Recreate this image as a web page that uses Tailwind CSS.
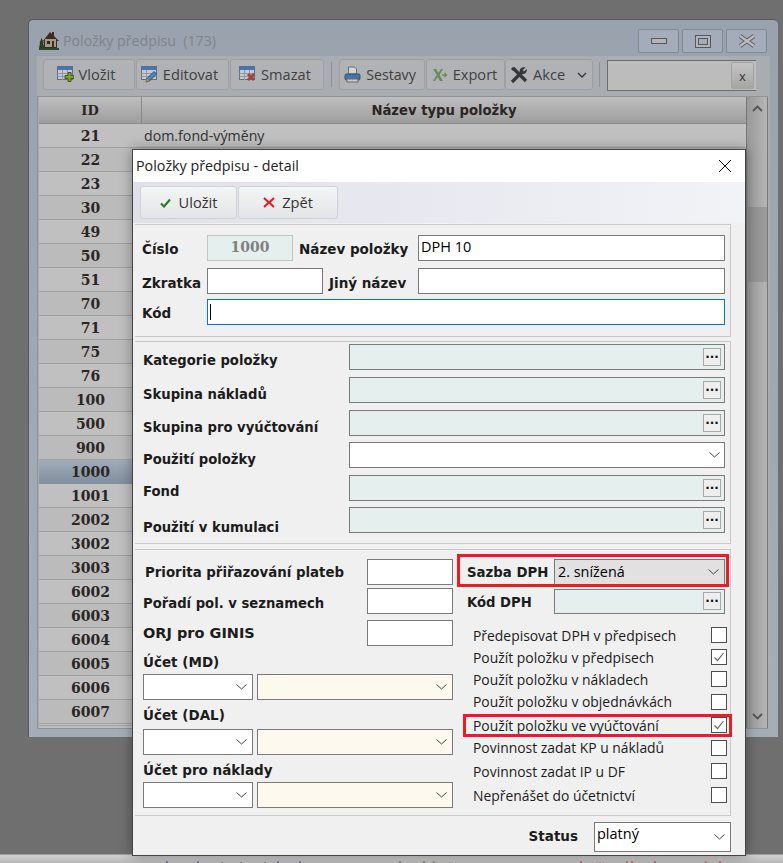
<!doctype html>
<html>
<head>
    <meta charset="utf-8">
    <title>Položky předpisu</title>
    <script src="https://cdn.jsdelivr.net/npm/@tailwindcss/browser@4"></script>
</head>
<body class="bg-[#6f6f6f]">
<div class="relative w-[783px] h-[863px] overflow-hidden bg-[#6f6f6f] font-['Open_Sans',sans-serif]">

    <!-- bottom strip of the page behind -->
    <div class="absolute left-0 right-0 top-[854px] h-[9px] bg-gradient-to-b from-[#cfcfcf] to-[#b8b8b8] border-t border-[#a0a0a0]">
        <svg width="783" height="8" viewBox="0 0 783 8" class="block">
            <path d="M167 6V8M198 6V8M222 7V8M241 7V8M265 7V8M278 6V8M300 6V8" stroke="#3c4d8c"/>
            <path d="M400 6V8M424 6V8M434 6V8M450 7V8" stroke="#4a7a3a"/>
            <path d="M581 6V8M600 7V8M627 6V8M632 6V8M655 6V8M706 6V8M720 6V8" stroke="#c83a3a"/>
        </svg>
    </div>

    <!-- background window -->
    <div class="absolute left-[28px] top-[19px] w-[750px] h-[718px] rounded-t-[5px] bg-gradient-to-b from-[#9aa2ad] to-[#a5adb8] border-t border-l border-[#55595e] flex flex-col">
        <div class="h-[36px] flex items-center pl-[10px] pr-[11px] pt-[6px] shrink-0">
            <svg width="20" height="20" viewBox="0 0 20 20" class="shrink-0">
                <path d="M2.500 7 L5 12 L4 12 L5.500 17 L0 17 L1 12 L0.500 12 Z" fill="#2c3d26"/>
                <path d="M4 10 L11 1 L13 3 L13 1 L15 1 L15 5 L20 10 L18 10 L18 17 L5 17 L5 10 Z" fill="#3d2a20"/>
                <rect x="6" y="8" width="11" height="8" fill="#a59a8a"/>
                <rect x="8" y="10" width="3" height="3" fill="#2a2522"/>
                <rect x="13" y="10" width="2" height="6" fill="#3d2f27"/>
                <rect x="0" y="17" width="20" height="2" fill="#33442c"/>
            </svg>
            <span class="ml-[4px] text-[14.200px] text-[#7f858c] whitespace-pre">Položky předpisu  (173)</span>
            <div class="ml-auto flex gap-[3px]">
                <div class="w-[41px] h-[24px] border border-[#7d8a9b] rounded-[2px] bg-[#a3acb8] flex items-center justify-center"><div class="w-[16px] h-[6px] border border-[#55585c] bg-[#b4b4b4]"></div></div>
                <div class="w-[41px] h-[24px] border border-[#7d8a9b] rounded-[2px] bg-[#a3acb8] flex items-center justify-center"><div class="w-[16px] h-[13px] border border-[#55585c] bg-[#b4b4b4] flex items-center justify-center"><div class="w-[10px] h-[7px] border border-[#55585c] bg-[#a3acb8]"></div></div></div>
                <div class="w-[41px] h-[24px] border border-[#7d8a9b] rounded-[2px] bg-[#a3acb8] flex items-center justify-center">
                    <svg width="18" height="14" viewBox="0 0 18 14"><path d="M2 2 L16 12 M16 2 L2 12" stroke="#55585c" stroke-width="4"/><path d="M2 2 L16 12 M16 2 L2 12" stroke="#bdbdbd" stroke-width="2.400"/></svg>
                </div>
            </div>
        </div>
        <div class="ml-[8px] mr-[8px] mb-[8px] flex-1 flex flex-col min-h-0 bg-[#a9adb2]">
            <!-- toolbar -->
            <div class="h-[40px] flex items-start pt-[3px] pl-[6px] shrink-0 text-[14.600px] text-[#3f3f3f]">
                <div class="w-[92px] h-[31px] pr-[6px] rounded-[3px] border border-[#9c9fa3] bg-[#b0b2b5] flex items-center justify-center gap-[5px]">
                    <svg width="17" height="17" viewBox="0 0 17 17"><rect x="0.500" y="0.500" width="15" height="13" fill="#c6c9ce" stroke="#5c6f8a"/><rect x="1" y="1" width="14" height="3" fill="#3f78b5"/><path d="M0.500 7.500H15M0.500 10.500H15M5.500 4V14M10.500 4V14" stroke="#8f98a5"/><path d="M11 6.500h3v3h3v3h-3v3h-3v-3H8v-3h3z" fill="#7fa32a" stroke="#40591a"/></svg>
                    <span>Vložit</span>
                </div>
                <div class="ml-[1px] w-[93px] h-[31px] pr-[6px] rounded-[3px] border border-[#9c9fa3] bg-[#b0b2b5] flex items-center justify-center gap-[5px]">
                    <svg width="17" height="17" viewBox="0 0 17 17"><rect x="0.500" y="0.500" width="15" height="13" fill="#c6c9ce" stroke="#5c6f8a"/><rect x="1" y="1" width="14" height="3" fill="#3f78b5"/><path d="M0.500 7.500H15M0.500 10.500H15M5.500 4V14" stroke="#8f98a5"/><path d="M5 16 L6 12.500 L13 5.500 L15.500 8 L8.500 15 Z" fill="#4f86bd" stroke="#34506e"/><path d="M5 16 L6 12.500 L8.500 15 Z" fill="#c88a3a"/></svg>
                    <span>Editovat</span>
                </div>
                <div class="ml-[1px] w-[94px] h-[31px] pr-[4px] rounded-[3px] border border-[#9c9fa3] bg-[#b0b2b5] flex items-center justify-center gap-[5px]">
                    <svg width="17" height="17" viewBox="0 0 17 17"><rect x="0.500" y="0.500" width="15" height="13" fill="#c6c9ce" stroke="#5c6f8a"/><rect x="1" y="1" width="14" height="3" fill="#3f78b5"/><path d="M0.500 7.500H15M0.500 10.500H15M5.500 4V14M10.500 4V14" stroke="#8f98a5"/><path d="M9 8 L15 14 M15 8 L9 14" stroke="#a8433a" stroke-width="3"/></svg>
                    <span>Smazat</span>
                </div>
                <div class="ml-[7px] mt-[3px] w-px h-[25px] bg-[#8f9296]"></div>
                <div class="ml-[7px] w-[86px] h-[31px] pr-[4px] rounded-[3px] border border-[#9c9fa3] bg-[#b0b2b5] flex items-center justify-center gap-[5px] text-[14.200px]">
                    <svg width="17" height="17" viewBox="0 0 17 17"><path d="M4.500 1h6l2 2v5h-8z" fill="#d5d5d5" stroke="#6d6d6d"/><rect x="1" y="8" width="15" height="6" rx="1.500" fill="#3f78ad" stroke="#3a4f66"/><rect x="3" y="13" width="11" height="3" fill="#c8c8c8" stroke="#6d6d6d"/></svg>
                    <span>Sestavy</span>
                </div>
                <div class="ml-[1px] w-[79px] h-[31px] pr-[2px] rounded-[3px] border border-[#9c9fa3] bg-[#b0b2b5] flex items-center justify-center gap-[5px]">
                    <svg width="16" height="14" viewBox="0 0 16 14"><path d="M1 1h3l2.500 4L9 1h2L7.500 7 11 13H8L5.800 9 3 13H1l4-6z" fill="#6a8a55"/><path d="M10 7h4M12.500 5l2 2-2 2" stroke="#6a8a55" stroke-width="1.400" fill="none"/></svg>
                    <span>Export</span>
                </div>
                <div class="w-[88px] h-[31px] rounded-[3px] border border-[#9c9fa3] bg-[#b0b2b5] flex items-center pl-[4px]">
                    <svg width="18" height="18" viewBox="0 0 18 18"><path d="M2 16 L12 6" stroke="#33363a" stroke-width="3.200"/><path d="M10 7 C8.500 3 12 0.500 15.500 1.500 L12.800 4 L14 5.500 L16.800 3 C17.500 7 13.500 9.500 10 7Z" fill="#33363a"/><path d="M3 2 L16 15" stroke="#33363a" stroke-width="3.200"/><path d="M1 3 L3 1 L5 3 L3 5Z" fill="#33363a"/></svg>
                    <span class="ml-[5px]">Akce</span>
                    <svg width="10" height="6" viewBox="0 0 10 6" class="ml-auto mr-[5px]"><path d="M1 1 L5 5 L9 1" stroke="#333" stroke-width="1.300" fill="none"/></svg>
                </div>
                <div class="ml-[6px] mt-[3px] w-px h-[25px] bg-[#8f9296]"></div>
                <div class="ml-[7px] mt-[1px] w-[149px] h-[31px] border-l border-t border-b border-[#6d6f72] bg-[#bcbcbc] flex items-center justify-end pr-[2px]">
                    <div class="w-[23px] h-[27px] rounded-[2px] border border-[#a3a3a3] bg-gradient-to-b from-[#c4c4c4] to-[#a6a6a6] text-center leading-[27px] text-[13px] text-[#333]">x</div>
                </div>
            </div>
            <!-- table -->
            <div class="flex-1 mr-[2px] pl-[1px] border-t border-l border-b border-[#8f9296] flex min-h-0 overflow-hidden">
                <div class="flex-1 min-w-0 flex flex-col bg-[#bfbfbf]">
                    <div class="h-[27px] shrink-0 flex bg-gradient-to-b from-[#bfbfbf] to-[#9d9d9d] border-b border-[#8a8a8a] font-bold text-[#2b2523] text-[14px]">
                        <div class="w-[103px] border-r border-[#8a8a8a] text-center leading-[28px] font-['DejaVu_Serif',serif] text-[13px]">ID</div>
                        <div class="flex-1 text-center leading-[28px] font-['DejaVu_Sans',sans-serif] text-[13.200px]">Název typu položky</div>
                    </div>
                    <div class="h-[24px] flex border-b border-[#a0a0a0] bg-[#c0c0c0]"><div class="w-[103px] text-center leading-[25px] font-bold font-['DejaVu_Serif',serif] text-[14px] text-[#2b2523]">21</div><div class="pl-[2px] leading-[23px] text-[14.200px] text-[#333]">dom.fond-výměny</div></div>
                    <div class="h-[24px] border-b border-[#a0a0a0] bg-[#bbbbbb] w-full"><div class="w-[103px] text-center leading-[25px] font-bold font-['DejaVu_Serif',serif] text-[14px] text-[#2b2523]">22</div></div>
                    <div class="h-[24px] border-b border-[#a0a0a0] bg-[#c0c0c0] w-full"><div class="w-[103px] text-center leading-[25px] font-bold font-['DejaVu_Serif',serif] text-[14px] text-[#2b2523]">23</div></div>
                    <div class="h-[24px] border-b border-[#a0a0a0] bg-[#bbbbbb] w-full"><div class="w-[103px] text-center leading-[25px] font-bold font-['DejaVu_Serif',serif] text-[14px] text-[#2b2523]">30</div></div>
                    <div class="h-[24px] border-b border-[#a0a0a0] bg-[#c0c0c0] w-full"><div class="w-[103px] text-center leading-[25px] font-bold font-['DejaVu_Serif',serif] text-[14px] text-[#2b2523]">49</div></div>
                    <div class="h-[24px] border-b border-[#a0a0a0] bg-[#bbbbbb] w-full"><div class="w-[103px] text-center leading-[25px] font-bold font-['DejaVu_Serif',serif] text-[14px] text-[#2b2523]">50</div></div>
                    <div class="h-[24px] border-b border-[#a0a0a0] bg-[#c0c0c0] w-full"><div class="w-[103px] text-center leading-[25px] font-bold font-['DejaVu_Serif',serif] text-[14px] text-[#2b2523]">51</div></div>
                    <div class="h-[24px] border-b border-[#a0a0a0] bg-[#bbbbbb] w-full"><div class="w-[103px] text-center leading-[25px] font-bold font-['DejaVu_Serif',serif] text-[14px] text-[#2b2523]">70</div></div>
                    <div class="h-[24px] border-b border-[#a0a0a0] bg-[#c0c0c0] w-full"><div class="w-[103px] text-center leading-[25px] font-bold font-['DejaVu_Serif',serif] text-[14px] text-[#2b2523]">71</div></div>
                    <div class="h-[24px] border-b border-[#a0a0a0] bg-[#bbbbbb] w-full"><div class="w-[103px] text-center leading-[25px] font-bold font-['DejaVu_Serif',serif] text-[14px] text-[#2b2523]">75</div></div>
                    <div class="h-[24px] border-b border-[#a0a0a0] bg-[#c0c0c0] w-full"><div class="w-[103px] text-center leading-[25px] font-bold font-['DejaVu_Serif',serif] text-[14px] text-[#2b2523]">76</div></div>
                    <div class="h-[24px] border-b border-[#a0a0a0] bg-[#bbbbbb] w-full"><div class="w-[103px] text-center leading-[25px] font-bold font-['DejaVu_Serif',serif] text-[14px] text-[#2b2523]">100</div></div>
                    <div class="h-[24px] border-b border-[#a0a0a0] bg-[#c0c0c0] w-full"><div class="w-[103px] text-center leading-[25px] font-bold font-['DejaVu_Serif',serif] text-[14px] text-[#2b2523]">500</div></div>
                    <div class="h-[24px] border-b border-[#a0a0a0] bg-[#bbbbbb] w-full"><div class="w-[103px] text-center leading-[25px] font-bold font-['DejaVu_Serif',serif] text-[14px] text-[#2b2523]">900</div></div>
                    <div class="h-[24px] bg-gradient-to-b from-[#a0acb9] to-[#808e9d] w-full"><div class="w-[103px] text-center leading-[25px] font-bold font-['DejaVu_Serif',serif] text-[14px] text-[#2b2523]">1000</div></div>
                    <div class="h-[24px] border-b border-[#a0a0a0] bg-[#c0c0c0] w-full"><div class="w-[103px] text-center leading-[25px] font-bold font-['DejaVu_Serif',serif] text-[14px] text-[#2b2523]">1001</div></div>
                    <div class="h-[24px] border-b border-[#a0a0a0] bg-[#bbbbbb] w-full"><div class="w-[103px] text-center leading-[25px] font-bold font-['DejaVu_Serif',serif] text-[14px] text-[#2b2523]">2002</div></div>
                    <div class="h-[24px] border-b border-[#a0a0a0] bg-[#c0c0c0] w-full"><div class="w-[103px] text-center leading-[25px] font-bold font-['DejaVu_Serif',serif] text-[14px] text-[#2b2523]">3002</div></div>
                    <div class="h-[24px] border-b border-[#a0a0a0] bg-[#bbbbbb] w-full"><div class="w-[103px] text-center leading-[25px] font-bold font-['DejaVu_Serif',serif] text-[14px] text-[#2b2523]">3003</div></div>
                    <div class="h-[24px] border-b border-[#a0a0a0] bg-[#c0c0c0] w-full"><div class="w-[103px] text-center leading-[25px] font-bold font-['DejaVu_Serif',serif] text-[14px] text-[#2b2523]">6002</div></div>
                    <div class="h-[24px] border-b border-[#a0a0a0] bg-[#bbbbbb] w-full"><div class="w-[103px] text-center leading-[25px] font-bold font-['DejaVu_Serif',serif] text-[14px] text-[#2b2523]">6003</div></div>
                    <div class="h-[24px] border-b border-[#a0a0a0] bg-[#c0c0c0] w-full"><div class="w-[103px] text-center leading-[25px] font-bold font-['DejaVu_Serif',serif] text-[14px] text-[#2b2523]">6004</div></div>
                    <div class="h-[24px] border-b border-[#a0a0a0] bg-[#bbbbbb] w-full"><div class="w-[103px] text-center leading-[25px] font-bold font-['DejaVu_Serif',serif] text-[14px] text-[#2b2523]">6005</div></div>
                    <div class="h-[24px] border-b border-[#a0a0a0] bg-[#c0c0c0] w-full"><div class="w-[103px] text-center leading-[25px] font-bold font-['DejaVu_Serif',serif] text-[14px] text-[#2b2523]">6006</div></div>
                    <div class="h-[24px] border-b border-[#a0a0a0] bg-[#bbbbbb] w-full"><div class="w-[103px] text-center leading-[25px] font-bold font-['DejaVu_Serif',serif] text-[14px] text-[#2b2523]">6007</div></div>
                    <div class="h-[2px] shrink-0 border-b border-[#a0a0a0]"></div>
                </div>
                <!-- scrollbar -->
                <div class="w-[22px] shrink-0 flex flex-col items-center bg-gradient-to-r from-[#999999] to-[#b5b5b5] border-l border-[#777] border-r">
                    <svg width="11" height="7" viewBox="0 0 11 7" class="mt-[8px]"><path d="M1 6 L5.500 1.500 L10 6" stroke="#555" stroke-width="1.800" fill="none"/></svg>
                    <div class="w-[19px] h-[75px] mt-[95px] bg-gradient-to-r from-[#8e8e8e] to-[#9c9c9c]"></div>
                    <svg width="11" height="7" viewBox="0 0 11 7" class="mt-auto mb-[8px]"><path d="M1 1 L5.500 5.500 L10 1" stroke="#555" stroke-width="1.800" fill="none"/></svg>
                </div>
            </div>
        </div>
    </div>

    <!-- detail dialog -->
    <div class="absolute left-[132px] top-[149px] w-[614px] h-[707px] border border-[#444] bg-[#f0f0f0] flex flex-col shadow-[0_0_12px_rgba(0,0,0,0.35)]">
        <div class="h-[32px] shrink-0 bg-white flex items-center pl-[3px] pr-[13px] text-[14.300px] text-[#222]">
            <span>Položky předpisu - detail</span>
            <svg width="14" height="14" viewBox="0 0 14 14" class="ml-auto"><path d="M1 1 L13 13 M13 1 L1 13" stroke="#111" stroke-width="1"/></svg>
        </div>
        <div class="h-[41px] shrink-0 bg-gradient-to-r from-[#dfe0ea] to-[#f2f3f7] flex items-center pl-[7px] text-[14.600px] text-[#333]">
            <div class="w-[97px] h-[33px] rounded-[3px] border border-[#d0d2d6] bg-gradient-to-b from-[#f3f4f4] to-[#e4e5e7] flex items-center justify-center gap-[8px]">
                <svg width="11" height="10" viewBox="0 0 11 10"><path d="M1 5.500 L4 8.500 L10 1.500" stroke="#1e7d1e" stroke-width="2" fill="none"/></svg>
                <span>Uložit</span>
            </div>
            <div class="ml-[1px] w-[100px] h-[33px] rounded-[3px] border border-[#d0d2d6] bg-gradient-to-b from-[#f3f4f4] to-[#e4e5e7] flex items-center justify-center gap-[7px]">
                <svg width="12" height="11" viewBox="0 0 12 11"><path d="M1 1 L11 10 M11 1 L1 10" stroke="#e8141c" stroke-width="2"/></svg>
                <span>Zpět</span>
            </div>
        </div>

        <div class="flex-1 min-h-0 pl-[2px] pr-[14px] pt-[1px] text-[14px] font-bold text-[#1c1c1c] font-['DejaVu_Sans',sans-serif]">
            <!-- group 1 -->
            <div class="h-[113px] border-t border-b border-r border-[#c8c8c8] pt-[10px] pl-[8px] text-[13.500px]">
                <div class="flex items-center h-[26px]">
                    <span class="w-[64px] pt-[3px] -ml-[1px] mr-[1px]">Číslo</span>
                    <div class="w-[86px] h-[26px] border border-[#c4c4c4] bg-[#e4efee] text-center leading-[22px] font-['DejaVu_Serif',serif] text-[#808080] text-[14px]">1000</div>
                    <span class="w-[125px] pt-[3px] pl-[6px]">Název položky</span>
                    <div class="w-[307px] h-[26px] border border-[#7a7a7a] bg-white pl-[2px] font-normal text-[14.500px] leading-[22px] font-['Open_Sans',sans-serif] text-black">DPH 10</div>
                </div>
                <div class="flex items-center h-[26px] mt-[7px]">
                    <span class="w-[64px] pt-[4px] -ml-[1px] mr-[1px]">Zkratka</span>
                    <div class="w-[116px] h-[26px] border border-[#7a7a7a] bg-white"></div>
                    <span class="w-[95px] pt-[4px] pl-[6px]">Jiný název</span>
                    <div class="w-[307px] h-[26px] border border-[#7a7a7a] bg-white"></div>
                </div>
                <div class="flex items-center h-[26px] mt-[5px]">
                    <span class="w-[64px] pt-[2px] -ml-[1px] mr-[1px]">Kód</span>
                    <div class="w-[518px] h-[26px] border border-[#0078d7] bg-white pl-[2px] flex items-center"><div class="w-px h-[16px] bg-black"></div></div>
                </div>
            </div>
            <!-- group 2 -->
            <div class="mt-[4px] h-[203px] border-t border-b border-r border-[#c8c8c8] pt-[2px] pl-[8px] text-[13.200px]">
                <div class="flex items-center h-[26px]">
                    <span class="w-[206px] pt-[8px]">Kategorie položky</span>
                    <div class="w-[376px] h-[26px] border border-[#7a7a7a] bg-[#e4efee] flex items-center justify-end pr-[3px]"><div class="w-[18px] h-[18px] border border-[#a8a8a8] bg-[#eeeeee] text-center leading-[11px] text-[#111] text-[12px] font-bold">...</div></div>
                </div>
                <div class="flex items-center h-[26px] mt-[7px]">
                    <span class="w-[206px] pt-[10px]">Skupina nákladů</span>
                    <div class="w-[376px] h-[26px] border border-[#7a7a7a] bg-[#e4efee] flex items-center justify-end pr-[3px]"><div class="w-[18px] h-[18px] border border-[#a8a8a8] bg-[#eeeeee] text-center leading-[11px] text-[#111] text-[12px] font-bold">...</div></div>
                </div>
                <div class="flex items-center h-[26px] mt-[7px]">
                    <span class="w-[206px] pt-[10px]">Skupina pro vyúčtování</span>
                    <div class="w-[376px] h-[26px] border border-[#7a7a7a] bg-[#e4efee] flex items-center justify-end pr-[3px]"><div class="w-[18px] h-[18px] border border-[#a8a8a8] bg-[#eeeeee] text-center leading-[11px] text-[#111] text-[12px] font-bold">...</div></div>
                </div>
                <div class="flex items-center h-[26px] mt-[6px]">
                    <span class="w-[206px] pt-[10px]">Použití položky</span>
                    <div class="w-[376px] h-[26px] border border-[#7a7a7a] bg-white flex items-center justify-end pr-[4px]"><svg width="11" height="6" viewBox="0 0 11 6"><path d="M0.500 0.500 L5.500 5 L10.500 0.500" stroke="#444" fill="none"/></svg></div>
                </div>
                <div class="flex items-center h-[26px] mt-[7px]">
                    <span class="w-[206px] pt-[8px]">Fond</span>
                    <div class="w-[376px] h-[26px] border border-[#7a7a7a] bg-[#e4efee] flex items-center justify-end pr-[3px]"><div class="w-[18px] h-[18px] border border-[#a8a8a8] bg-[#eeeeee] text-center leading-[11px] text-[#111] text-[12px] font-bold">...</div></div>
                </div>
                <div class="flex items-center h-[26px] mt-[6px]">
                    <span class="w-[206px] pt-[16px]">Použití v kumulaci</span>
                    <div class="w-[376px] h-[26px] border border-[#7a7a7a] bg-[#e4efee] flex items-center justify-end pr-[3px]"><div class="w-[18px] h-[18px] border border-[#a8a8a8] bg-[#eeeeee] text-center leading-[11px] text-[#111] text-[12px] font-bold">...</div></div>
                </div>
            </div>
            <!-- group 3 -->
            <div class="mt-[5px] h-[267px] border-t border-b border-[#c8c8c8] flex text-[13.500px]">
                <div class="w-[323px] pl-[8px] pt-[9px]">
                    <div class="flex items-center h-[26px]"><span class="w-[224px] pl-[2px] pt-[3px] text-[13.350px]">Priorita přiřazování plateb</span><div class="w-[86px] h-[26px] border border-[#7a7a7a] bg-white"></div></div>
                    <div class="flex items-center h-[26px] mt-[3px]"><span class="w-[224px] pt-[5px] text-[13.200px]">Pořadí pol. v seznamech</span><div class="w-[86px] h-[26px] border border-[#7a7a7a] bg-white"></div></div>
                    <div class="flex items-center h-[26px] mt-[6px]"><span class="w-[224px] pt-[2px] text-[14.500px]">ORJ pro GINIS</span><div class="w-[86px] h-[26px] border border-[#7a7a7a] bg-white"></div></div>
                    <div class="h-[28px] leading-[32px]">Účet (MD)</div>
                    <div class="flex gap-[4px] h-[26px]">
                        <div class="w-[110px] border border-[#7a7a7a] bg-white flex items-center justify-end pr-[5px]"><svg width="11" height="6" viewBox="0 0 11 6"><path d="M0.500 0.500 L5.500 5 L10.500 0.500" stroke="#444" fill="none"/></svg></div>
                        <div class="w-[196px] border border-[#7a7a7a] bg-[#fdf9ef] flex items-center justify-end pr-[5px]"><svg width="11" height="6" viewBox="0 0 11 6"><path d="M0.500 0.500 L5.500 5 L10.500 0.500" stroke="#444" fill="none"/></svg></div>
                    </div>
                    <div class="h-[29px] leading-[31px]">Účet (DAL)</div>
                    <div class="flex gap-[4px] h-[26px]">
                        <div class="w-[110px] border border-[#7a7a7a] bg-white flex items-center justify-end pr-[5px]"><svg width="11" height="6" viewBox="0 0 11 6"><path d="M0.500 0.500 L5.500 5 L10.500 0.500" stroke="#444" fill="none"/></svg></div>
                        <div class="w-[196px] border border-[#7a7a7a] bg-[#fdf9ef] flex items-center justify-end pr-[5px]"><svg width="11" height="6" viewBox="0 0 11 6"><path d="M0.500 0.500 L5.500 5 L10.500 0.500" stroke="#444" fill="none"/></svg></div>
                    </div>
                    <div class="h-[27px] leading-[31px]">Účet pro náklady</div>
                    <div class="flex gap-[4px] h-[26px]">
                        <div class="w-[110px] border border-[#7a7a7a] bg-white flex items-center justify-end pr-[5px]"><svg width="11" height="6" viewBox="0 0 11 6"><path d="M0.500 0.500 L5.500 5 L10.500 0.500" stroke="#444" fill="none"/></svg></div>
                        <div class="w-[196px] border border-[#7a7a7a] bg-[#fdf9ef] flex items-center justify-end pr-[5px]"><svg width="11" height="6" viewBox="0 0 11 6"><path d="M0.500 0.500 L5.500 5 L10.500 0.500" stroke="#444" fill="none"/></svg></div>
                    </div>
                </div>
                <div class="flex-1 border-r border-[#c8c8c8] pt-[9px] relative font-normal">
                    <div class="flex items-center h-[26px] font-bold"><span class="w-[96px] pl-[9px] pt-[2px] text-[13.300px]">Sazba DPH</span>
                        <div class="w-[171px] h-[26px] border border-[#7a7a7a] bg-[#e1e1e1] flex items-center pl-[3px] pb-[1px] font-normal text-[14.400px] font-['Open_Sans',sans-serif] text-black">2. snížená<svg width="11" height="6" viewBox="0 0 11 6" class="ml-auto mr-[5px]"><path d="M0.500 0.500 L5.500 5 L10.500 0.500" stroke="#444" fill="none"/></svg></div>
                    </div>
                    <div class="flex items-center h-[26px] mt-[3px] font-bold"><span class="w-[96px] pl-[9px] pt-[4px] text-[13.200px]">Kód DPH</span>
                        <div class="w-[171px] h-[25px] border border-[#7a7a7a] bg-[#e4efee] flex items-center justify-end pr-[3px]"><div class="w-[18px] h-[18px] border border-[#a8a8a8] bg-[#eeeeee] text-center leading-[11px] text-[#111] text-[12px] font-bold">...</div></div>
                    </div>
                    <div class="font-['Open_Sans',sans-serif] text-[13.900px] text-[#1c1c1c] mt-[10px] pl-[15px] pr-[3px]">
                        <div class="flex items-center justify-between h-[22px]"><span class="pt-[2px]">Předepisovat DPH v předpisech</span><div class="w-[16px] h-[16px] border border-[#4d4d4d] bg-white"></div></div>
                        <div class="flex items-center justify-between h-[22px]"><span class="pt-[2px]">Použít položku v předpisech</span><div class="w-[16px] h-[16px] border border-[#4d4d4d] bg-white"><svg width="14" height="14" viewBox="0 0 14 14"><path d="M2.500 7.500 L5.500 10.500 L11.500 3" stroke="#666" stroke-width="1.200" fill="none"/></svg></div></div>
                        <div class="flex items-center justify-between h-[22px]"><span class="pt-[2px]">Použít položku v nákladech</span><div class="w-[16px] h-[16px] border border-[#4d4d4d] bg-white"></div></div>
                        <div class="flex items-center justify-between h-[23px]"><span class="pt-[2px]">Použít položku v objednávkách</span><div class="w-[16px] h-[16px] border border-[#4d4d4d] bg-white"></div></div>
                        <div class="flex items-center justify-between h-[23px]"><span class="pt-[3px]">Použít položku ve vyúčtování</span><div class="w-[16px] h-[16px] border border-[#4d4d4d] bg-white"><svg width="14" height="14" viewBox="0 0 14 14"><path d="M2.500 7.500 L5.500 10.500 L11.500 3" stroke="#666" stroke-width="1.200" fill="none"/></svg></div></div>
                        <div class="flex items-center justify-between h-[23px]"><span class="pt-[2px]">Povinnost zadat KP u nákladů</span><div class="w-[16px] h-[16px] border border-[#4d4d4d] bg-white"></div></div>
                        <div class="flex items-center justify-between h-[24px]"><span class="pt-[2px]">Povinnost zadat IP u DF</span><div class="w-[16px] h-[16px] border border-[#4d4d4d] bg-white"></div></div>
                        <div class="flex items-center justify-between h-[24px]"><span class="pt-[2px]">Nepřenášet do účetnictví</span><div class="w-[16px] h-[16px] border border-[#4d4d4d] bg-white"></div></div>
                    </div>
                    <!-- red highlights -->
                    <div class="absolute -left-[1px] top-[4px] w-[272px] h-[33px] border-[3px] border-[#ed1c24]"></div>
                    <div class="absolute left-[5px] top-[164px] w-[269px] h-[23px] border-[3px] border-[#ed1c24]"></div>
                </div>
            </div>
            <!-- status -->
            <div class="flex items-center justify-end h-[38px] pt-[4px] text-[13.500px]">
                <span class="mr-[16px] pb-[1px]">Status</span>
                <div class="w-[137px] h-[30px] border border-[#7a7a7a] bg-white flex items-center pl-[2px] pb-[6px] font-normal text-[14.500px] font-['Open_Sans',sans-serif] text-black">platný<svg width="11" height="6" viewBox="0 0 11 6" class="ml-auto mr-[5px] mt-[6px]"><path d="M0.500 0.500 L5.500 5 L10.500 0.500" stroke="#444" fill="none"/></svg></div>
            </div>
        </div>
    </div>
</div>
</body>
</html>
